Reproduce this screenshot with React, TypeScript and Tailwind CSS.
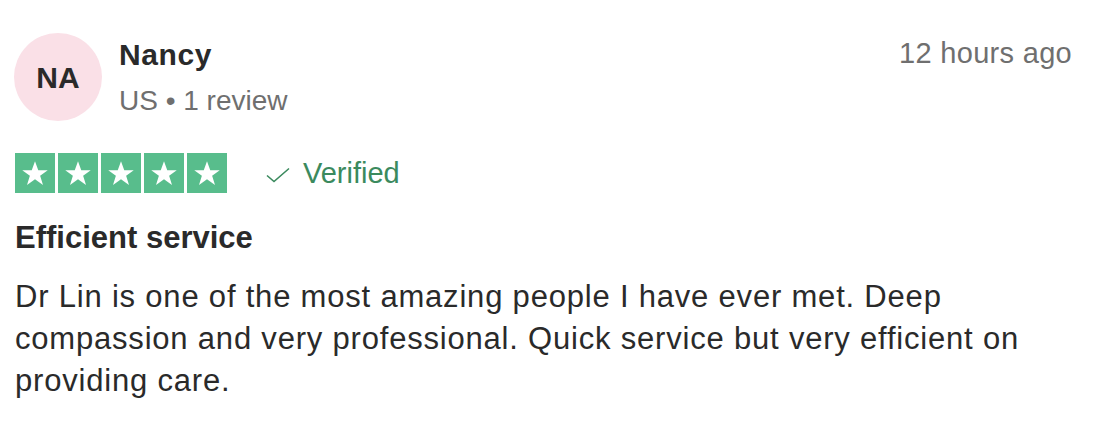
const Star = () => (
  <div className="flex h-10 w-10 items-center justify-center bg-[#58bd8c]">
    <svg viewBox="0 0 24 24" className="h-[30px] w-[30px]" fill="#ffffff">
      <path d="M12 2.5l2.6 7.2h7.6l-6.1 4.5 2.3 7.3L12 17l-6.4 4.5 2.3-7.3-6.1-4.5h7.6z" />
    </svg>
  </div>
);

export default function App() {
  return (
    <div className="min-h-screen w-full bg-white font-['Liberation_Sans',Arial,sans-serif] text-[#2a2a2a]">
      <div className="px-[15px] pt-[33px]">
        <div className="flex items-start">
          <div className="-ml-px flex h-[88px] w-[88px] shrink-0 items-center justify-center rounded-full bg-[#fae0e7]">
            <span className="text-[30px] font-bold">NA</span>
          </div>
          <div className="ml-[17px] flex-1 pt-[4px]">
            <div className="text-[30px] font-bold leading-[36px] tracking-[0.6px]">Nancy</div>
            <div className="mt-[10px] text-[28px] leading-[36px] text-[#6f6f6f]">US • 1 review</div>
          </div>
          <div className="pt-[2px] pr-[7px] text-[29px] leading-[36px] tracking-[0.3px] text-[#6f6f6f]">12 hours ago</div>
        </div>

        <div className="mt-[32px] flex items-center">
          <div className="flex gap-[3px]">
            <Star />
            <Star />
            <Star />
            <Star />
            <Star />
          </div>
          <div className="ml-[39px] flex items-center gap-[13px] text-[29px] leading-[36px] text-[#3b8a5e]">
            <svg viewBox="0 0 24 16" className="mt-[4px] h-[16px] w-[24px]" fill="none" stroke="#3b8a5e" strokeWidth="1.6">
              <path d="M1 8.5l7 6L23 1.5" />
            </svg>
            <span>Verified</span>
          </div>
        </div>

        <h2 className="mt-[27px] text-[31px] font-bold leading-[36px]">Efficient service</h2>

        <p className="mt-[20px] max-w-[1050px] text-[31px] leading-[42px] tracking-[0.8px]">
          Dr Lin is one of the most amazing people I have ever met. Deep compassion and very professional. Quick
          service but very efficient on providing care.
        </p>
      </div>
    </div>
  );
}
